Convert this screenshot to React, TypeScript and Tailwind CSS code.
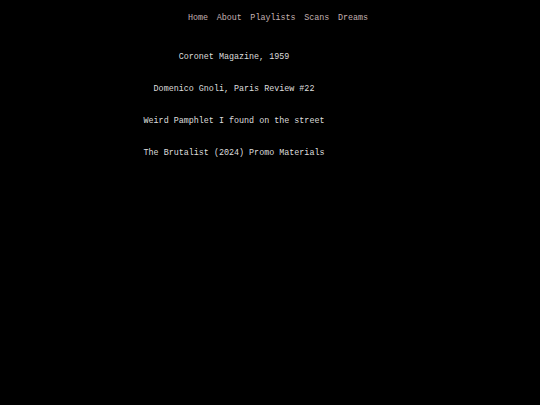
const links = ['Home', 'About', 'Playlists', 'Scans', 'Dreams'];

const scans = [
  'Coronet Magazine, 1959',
  'Domenico Gnoli, Paris Review #22',
  'Weird Pamphlet I found on the street',
  'The Brutalist (2024) Promo Materials',
];

export default function App() {
  return (
    <div className="min-h-screen w-full bg-black font-['Courier_New','Liberation_Mono',monospace] text-[8.4px]">
      {/* Nav */}
      <nav className="flex justify-center pl-4 pt-[13px]">
        <ul className="flex gap-[8.6px] leading-[10px] text-[#c4b2b2]">
          {links.map((l) => (
            <li key={l}>
              <a href="#">{l}</a>
            </li>
          ))}
        </ul>
      </nav>

      {/* Scans list */}
      <main className="flex justify-center pr-[72px] pt-[29px]">
        <ul className="flex flex-col items-center gap-[22px] text-[#dedede] leading-[10px]">
          {scans.map((s) => (
            <li key={s}>{s}</li>
          ))}
        </ul>
      </main>
    </div>
  );
}
